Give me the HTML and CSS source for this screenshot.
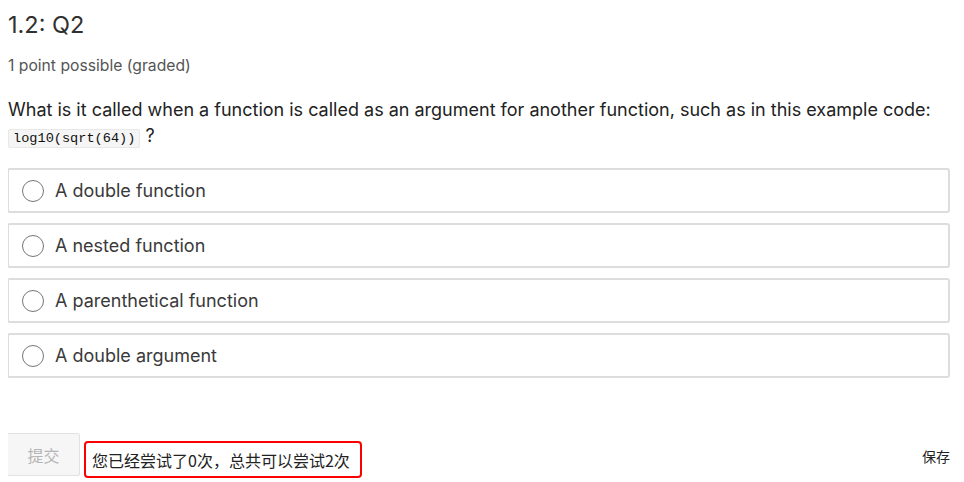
FILE: index.html
```html
<!DOCTYPE html>
<html lang="en">
<head>
    <meta charset="UTF-8">
    <title>1.2: Q2</title>
    <link rel="stylesheet" href="styles.css">
</head>
<body>
    <div class="problem">
        <h2 class="problem-title">1.2: Q2</h2>
        <div class="problem-progress">1 point possible (graded)</div>
        <p class="question">What is it called when a function is called as an argument for another function, such as in this example code: <code>log10(sqrt(64))</code> ?</p>
        <div class="choices">
            <label class="choice"><span class="radio"></span>A double function</label>
            <label class="choice"><span class="radio"></span>A nested function</label>
            <label class="choice"><span class="radio"></span>A parenthetical function</label>
            <label class="choice"><span class="radio"></span>A double argument</label>
        </div>
        <div class="action">
            <button class="submit" disabled>提交</button>
            <div class="attempts">您已经尝试了0次，总共可以尝试2次</div>
            <div class="save">保存</div>
        </div>
    </div>
</body>
</html>
```
FILE: styles.css
```css
body {
    margin: 8px;
    font-family: Inter, "Noto Sans CJK SC", sans-serif;
    color: #313131;
    background: #fff;
}
.problem-title {
    font-size: 23.5px;
    font-weight: 400;
    line-height: 26px;
    margin: 4px 0 0 0;
}
.problem-progress {
    font-size: 15.7px;
    color: #555;
    margin-top: 18px;
    line-height: 20px;
}
.question {
    font-size: 18px;
    line-height: 26px;
    margin: 21px 0 0 0;
    color: #222;
}
.question code {
    font-family: "Liberation Mono", monospace;
    font-size: 13.6px;
    color: #111;
    background: #f5f5f5;
    border: 1px solid #e8e8e8;
    border-radius: 2px;
    padding: 1px 4px;
}
.choices {
    display: flex;
    flex-direction: column;
    gap: 10px;
    margin-top: 16px;
}
.choice {
    display: flex;
    align-items: center;
    height: 41px;
    border: 2px solid #ddd;
    border-radius: 3px;
    margin-left: -1px;
    margin-right: 6px;
    padding-left: 13px;
    font-size: 18px;
    color: #3a3a3a;
}
.radio {
    width: 20px;
    height: 20px;
    border: 1px solid #767676;
    border-radius: 50%;
    margin-right: 11px;
}
.action {
    display: flex;
    align-items: flex-start;
    margin-top: 55px;
    margin-right: 6px;
    height: 46px;
}
.submit {
    width: 73px;
    height: 43px;
    margin-left: -1px;
    background: #f6f6f6;
    border: 1px solid #e2e2e2;
    border-radius: 2px;
    color: #b5b5b5;
    font-family: "Noto Sans CJK SC", sans-serif;
    font-size: 16px;
}
.attempts {
    box-sizing: border-box;
    height: 37px;
    margin-top: 8px;
    margin-left: 4px;
    border: 2px solid #f00;
    border-radius: 4px;
    padding: 0 10px 0 6px;
    display: flex;
    align-items: center;
    font-family: "Noto Sans CJK SC", sans-serif;
    font-size: 16px;
    color: #222;
}
.save {
    margin-left: auto;
    margin-top: 15px;
    font-family: "Noto Sans CJK SC", sans-serif;
    font-size: 14px;
    line-height: 16px;
    color: #222;
}
```
